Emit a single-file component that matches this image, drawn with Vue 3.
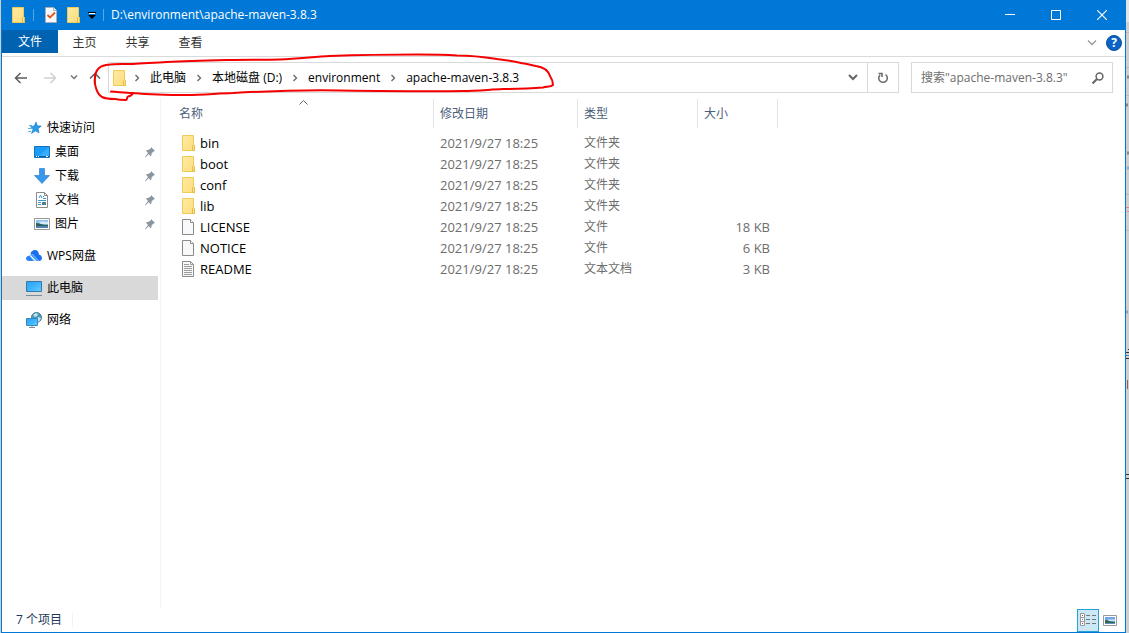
<script setup>
import { ref } from 'vue'

const tabs = ['主页', '共享', '查看']
const crumbs = ['此电脑', '本地磁盘 (D:)', 'environment', 'apache-maven-3.8.3']
const search = ref('')

const quick = [
  { name: '桌面', icon: 'desktop' },
  { name: '下载', icon: 'download' },
  { name: '文档', icon: 'document' },
  { name: '图片', icon: 'picture' }
]

const files = [
  { name: 'bin', kind: 'folder', type: '文件夹', size: '' },
  { name: 'boot', kind: 'folder', type: '文件夹', size: '' },
  { name: 'conf', kind: 'folder', type: '文件夹', size: '' },
  { name: 'lib', kind: 'folder', type: '文件夹', size: '' },
  { name: 'LICENSE', kind: 'file', type: '文件', size: '18 KB' },
  { name: 'NOTICE', kind: 'file', type: '文件', size: '6 KB' },
  { name: 'README', kind: 'text', type: '文本文档', size: '3 KB' }
]
const modified = '2021/9/27 18:25'
</script>

<template>
  <svg class="symbols" aria-hidden="true">
    <linearGradient id="fold" x1="0" y1="0" x2="1" y2="1">
      <stop offset="0" stop-color="#ffeaa2" /><stop offset="1" stop-color="#fcdd7e" />
    </linearGradient>
    <linearGradient id="screen" x1="0" y1="0" x2="1" y2="1">
      <stop offset="0" stop-color="#2ea0f5" /><stop offset="0.5" stop-color="#3cb4ff" /><stop offset="1" stop-color="#6cccff" />
    </linearGradient>
    <symbol id="folder" viewBox="0 0 16 16">
      <path d="M1.5.5h11v10h1v5h-12z" fill="url(#fold)" stroke="#eecb57" />
      <path d="M11.5 15.500v-5l1-1 1 1v5z" fill="#ffe48c" stroke="#e3bd43" />
    </symbol>
    <symbol id="file" viewBox="0 0 16 16">
      <path d="M1.500.5h8l3 3v12h-11z" fill="#f7f9fa" stroke="#8b8b8b" />
      <path d="M9.500.5v3h3" fill="#fff" stroke="#8b8b8b" />
    </symbol>
    <symbol id="text" viewBox="0 0 16 16">
      <path d="M1.500.5h8l3 3v12h-11z" fill="#f7f9fa" stroke="#8b8b8b" />
      <path d="M9.500.5v3h3M3 3.500h5M3 5.500h8M3 7.500h8M3 9.500h8M3 11.500h8M3 13.500h8" fill="none" stroke="#9b9b9b" />
    </symbol>
    <symbol id="check" viewBox="0 0 16 16">
      <path d="M2.500.5h8l3 3v12h-11z" fill="#f7f8fc" stroke="#a9adb8" />
      <path d="M10.500.5v3h3" fill="#fff" stroke="#a9adb8" />
      <path d="m4.500 8 2.500 2.500 5-5" fill="none" stroke="#e3561c" stroke-width="1.800" />
    </symbol>
    <symbol id="star" viewBox="0 0 16 16">
      <path d="m10 2 1.300 3.800 4 .2-3.200 2.700.9 4.300-3.500-2.200L5.500 13.500 7 9.300 4.500 6.500l3.700-.5z" fill="#2b9be8" stroke="#1779c8" stroke-width=".6" />
      <path d="M3 5.500h3M2 8.500h4M2 11.500h3" stroke="#5db8f2" />
    </symbol>
    <symbol id="desktop" viewBox="0 0 16 16">
      <path d="M.5 2.500h15v11H.5z" fill="#1b9cf7" stroke="#1373bd" />
      <path d="M15 3v9H5z" fill="#36adff" />
      <path d="M1 12.500h14" stroke="#0d5c9c" />
      <path d="M2 12.500h1M4 12.500h1M12 12.500h2" stroke="#fff" />
    </symbol>
    <symbol id="download" viewBox="0 0 16 16">
      <path d="M5.500.5h5v7h5L8 15.500.5 7.500h5z" fill="#3a96e8" stroke="#2f82d0" stroke-width=".7" />
    </symbol>
    <symbol id="document" viewBox="0 0 16 16">
      <path d="M2.500.5h8l3 3v12h-11z" fill="#fff" stroke="#8b8b8b" />
      <path d="M10.500.5v3h3" fill="none" stroke="#8b8b8b" />
      <path d="m5 6 1.500-3L8 6M9 4.500h1M9 6.500h3M4 8.500h8M4 10.500h3M4 12.500h3" fill="none" stroke="#3b97c9" />
      <path d="M8 10h4v3H8z" fill="#4c7f8b" />
    </symbol>
    <symbol id="picture" viewBox="0 0 16 16">
      <path d="M.5 2.500h15v11H.5z" fill="#fff" stroke="#989898" />
      <path d="M2 4h12v8H2z" fill="#8fc4ee" />
      <path d="M5 6.500c2-1.500 5-1 9-.5v2H6z" fill="#d7ebf5" />
      <path d="M2 7c3 0 4 1 7 1.500s3 0 5 .5v1H2z" fill="#315f61" />
      <path d="M2 10h12v2H2z" fill="#4f83ad" />
    </symbol>
    <symbol id="cloud" viewBox="0 0 16 16">
      <path d="M4.500 6C5 3 7 2 9 2c2.500 0 4 2 3.800 4.500C15 7 16 8.500 16 10c0 2-1.500 3-3 3L7 6.500z" fill="#1e6ff0" />
      <path d="M4 6.500c1.500-.7 3-.3 4 .8l5 5.700H9L5.500 9z" fill="#4aa5fa" />
      <path d="M3.500 7.500C1 8 0 9 0 10.500S1.200 13 3 13h5z" fill="#2b83f7" />
      <path d="m5 8 5 5" stroke="#fff" stroke-width=".8" />
    </symbol>
    <symbol id="pc" viewBox="0 0 16 16">
      <path d="M.5 1.500h15v10H.5z" fill="url(#screen)" stroke="#3279a8" />
      <path d="M0 15.500h16" stroke="#768e9e" />
    </symbol>
    <symbol id="network" viewBox="0 0 16 16">
      <circle cx="10.500" cy="5.500" r="5" fill="#4f97ba" stroke="#417c9b" />
      <path d="M7 3c2-2 4-2 5-1l-1 2-2 1zM12 5l3 1-2 4-2-2z" fill="#c3e4ec" />
      <path d="M.5 6.500h11v7H.5z" fill="url(#screen)" stroke="#3688b8" />
      <path d="M6 14v1.500M3 15.500h6" stroke="#768e9e" />
    </symbol>
    <symbol id="pin" viewBox="0 0 12 12">
      <path d="m7 1 4 4-1.500.5-2 2c.2 1.500-.3 2.300-1 3L5 8 1.300 11.500 1 11l3-4-2-2.500c1-.8 2-1 3-.8l2-1.700z" fill="#8a949e" />
    </symbol>
    <symbol id="chev" viewBox="0 0 6 8">
      <path d="m1.500 1 3 3-3 3" fill="none" stroke="#6a6a6a" stroke-width="1.400" />
    </symbol>
  </svg>

  <div class="desktop">
    <svg class="behind" width="3" height="633" aria-hidden="true">
      <path d="M0 0h3v22H0z" fill="#e4e4e4" />
      <path d="M0 32.500h3M0 67.500h3M0 95.500h3M0 194.500h3M0 230.500h3" stroke="#bcbcbc" />
      <path d="M1 77h2M0 105h2M1 153h2" stroke="#888" stroke-width="3" />
      <path d="M1 168h2M0 312h2" stroke="#7fb0d2" stroke-width="3" />
      <path d="M0 207.500h3M1 211.500h2" stroke="#d98b98" />
      <path d="M2 349.500h1M0 352.500h3M0 358.500h3M0 474.500h3M0 478.500h3" stroke="#333" />
      <path d="M0 355.500h3" stroke="#3f8cc4" />
      <path d="M1.500 380v9" stroke="#a35f4b" />
    </svg>
    <main class="window">
      <header class="title">
        <svg class="i16"><use href="#folder" /></svg>
        <span class="bar"></span>
        <button class="plain" aria-label="属性"><svg class="i16"><use href="#check" /></svg></button>
        <button class="plain new" aria-label="新建文件夹"><svg class="i16"><use href="#folder" /></svg></button>
        <button class="plain more" aria-label="自定义快速访问工具栏">
          <svg width="8" height="7" viewBox="0 0 8 7"><path d="M1 1.500h6" stroke="#fff" /><path d="M0 .5h8" stroke="#000" /><path d="M0 3h8L4 7z" fill="#000" /></svg>
        </button>
        <span class="bar"></span>
        <h1>D:\environment\apache-maven-3.8.3</h1>
        <div class="controls">
          <button class="plain" aria-label="最小化"><svg width="10" height="10"><path d="M0 4.500h10" stroke="#fff" /></svg></button>
          <button class="plain" aria-label="最大化"><svg width="10" height="10"><path d="M.5.5h9v9h-9z" fill="none" stroke="#fff" /></svg></button>
          <button class="plain" aria-label="关闭"><svg width="10" height="10"><path d="m0 0 10 10M10 0 0 10" stroke="#fff" stroke-width="1.200" /></svg></button>
        </div>
      </header>

      <nav class="ribbon">
        <button class="plain tab active">文件</button>
        <button v-for="t in tabs" :key="t" class="plain tab">{{ t }}</button>
        <button class="plain expand" aria-label="展开功能区"><svg width="10" height="6"><path d="m1 .5 4 4 4-4" fill="none" stroke="#999" stroke-width="1.300" /></svg></button>
        <button class="plain help" aria-label="帮助">?</button>
      </nav>

      <section class="address-row">
        <button class="plain back" aria-label="返回"><svg width="13" height="12"><path d="M13 6H1.500M6.500 1l-5 5 5 5" fill="none" stroke="#5c5c5c" stroke-width="1.500" /></svg></button>
        <button class="plain forward" aria-label="前进"><svg width="13" height="12"><path d="M0 6h11.500M6.500 1l5 5-5 5" fill="none" stroke="#d0d0d0" stroke-width="1.500" /></svg></button>
        <button class="plain recent" aria-label="最近位置"><svg width="8" height="5"><path d="m1 .5 3 3 3-3" fill="none" stroke="#777" stroke-width="1.500" /></svg></button>
        <button class="plain up" aria-label="上移"><svg width="12" height="12"><path d="M6 12V1.500M1 6.500l5-5 5 5" fill="none" stroke="#5c5c5c" stroke-width="1.500" /></svg></button>
        <div class="address">
          <svg class="i16"><use href="#folder" /></svg>
          <template v-for="c in crumbs" :key="c">
            <svg class="chev"><use href="#chev" /></svg>
            <button class="plain crumb">{{ c }}</button>
          </template>
          <button class="plain drop" aria-label="以前的位置"><svg width="10" height="7"><path d="m1 1 4 4 4-4" fill="none" stroke="#666" stroke-width="2" /></svg></button>
          <button class="plain refresh" aria-label="刷新">
            <svg width="12" height="12"><path d="M8.500 2.500A4.300 4.300 0 1 1 3 3M1.500 1.500H5v3.500" fill="none" stroke="#666" stroke-width="1.500" /></svg>
          </button>
        </div>
        <label class="search">
          <input v-model="search" type="text" aria-label="搜索" placeholder="搜索&quot;apache-maven-3.8.3&quot;" />
          <svg width="12" height="12"><circle cx="7.500" cy="4.500" r="3.400" fill="none" stroke="#666" stroke-width="1.500" /><path d="m5 7-4.500 4.500" stroke="#666" stroke-width="2" /></svg>
        </label>
        <svg class="ink" width="470" height="52" viewBox="90 52 470 52" aria-hidden="true">
          <path d="M111 91.500C119 92 126 93 133 93C150 94.500 168 95 187 95C202 95 217 93.500 233 93C268 91 304 90 340 90.500C380 91 425 91.500 463 91C477 91 490 89.500 503 89C518 89 532 88.500 543 87.500C548 86.500 551 87 553 85C553 82 552 79 550 76C548 70 543 67 536 66C530 65 529 64 521 63C513 61 505 60 497 59C484 57 470 55.500 457 55.500C443 54.500 430 54.500 417 54.500C388 54.500 358 55 330 56C313 57 296 59 280 59.500C262 60 245 59.500 227 60C207 60.500 187 61 167 62C155 62.500 144 63.500 133 64C124 64 115 63.500 110 64.500C104 65 101 66 99 68C96 71 95 74 95 78C94 82 95 85 96 88C97 92 99 95 102 97C106 99 110 99 115 99C119 100 123 100 126 100C128 99 126 98 128 96.500C131 96 132 95 133 93" fill="none" stroke="#f50000" stroke-width="2" stroke-linecap="round" stroke-linejoin="round" />
        </svg>
      </section>

      <div class="body">
        <nav class="side">
          <a href="#" class="item"><svg class="i16"><use href="#star" /></svg>快速访问</a>
          <a v-for="q in quick" :key="q.name" href="#" class="item child">
            <svg class="i16"><use :href="'#' + q.icon" /></svg>{{ q.name }}
            <svg class="pin"><use href="#pin" /></svg>
          </a>
          <a href="#" class="item group"><svg class="i16"><use href="#cloud" /></svg>WPS网盘</a>
          <a href="#" class="item group selected"><svg class="i16"><use href="#pc" /></svg>此电脑</a>
          <a href="#" class="item group"><svg class="i16"><use href="#network" /></svg>网络</a>
        </nav>
        <div class="list">
          <table>
            <colgroup><col class="c-name" /><col class="c-date" /><col class="c-type" /><col class="c-size" /></colgroup>
            <thead>
              <tr>
                <th class="sorted">名称<svg class="caret" width="9" height="5"><path d="m.5 4.500 4-4 4 4" fill="none" stroke="#666" /></svg></th>
                <th>修改日期</th><th>类型</th><th>大小</th>
              </tr>
            </thead>
            <tbody>
              <tr v-for="f in files" :key="f.name">
                <td class="name"><div><svg class="i16"><use :href="'#' + f.kind" /></svg>{{ f.name }}</div></td>
                <td class="date">{{ modified }}</td>
                <td class="type">{{ f.type }}</td>
                <td class="size">{{ f.size }}</td>
              </tr>
            </tbody>
          </table>
        </div>
      </div>

      <footer class="status">
        <span class="count">7 个项目</span>
        <button class="plain view on" aria-label="详细信息">
          <svg width="17" height="14">
            <path d="M.5.5h4v4h-4zM.5 4.500h4v4h-4zM.5 8.500h4v4h-4z" fill="#fff" stroke="#999" />
            <path d="M6 2.500h4M12 2.500h4M6 6.500h4M12 6.500h4M6 10.500h4M12 10.500h4" stroke="#777" />
            <path d="M2 2.500h1" stroke="#3a8a50" /><path d="M2 6.500h1" stroke="#4a8df0" /><path d="M2 10.500h1" stroke="#d22" />
          </svg>
        </button>
        <button class="plain view" aria-label="大缩略图">
          <svg width="14" height="11">
            <path d="M.5.5h13v10H.5z" fill="#fff" stroke="#989898" />
            <path d="M2 2h10v7H2z" fill="#6fa8f0" /><path d="M5 4.500h7v1.500H5z" fill="#cfe6f5" />
            <path d="M2 5c3 0 4 1.500 10 2v1H2z" fill="#35674f" /><path d="M2 8h10v1H2z" fill="#5b92c0" />
          </svg>
        </button>
      </footer>
    </main>
  </div>
</template>

<style>
body { margin: 0; background: #cfcfcf; }
</style>

<style scoped>
* { box-sizing: border-box; }
.symbols { position: absolute; width: 0; height: 0; }
.desktop {
  position: relative;
  min-height: 100vh;
  display: flex;
  padding: 0 3px 0 1px;
  background: #cfcfcf;
  font: 12px/20px "Open Sans", "Noto Sans CJK SC", sans-serif;
  color: #000;
}
.behind { position: absolute; right: 0; top: 0; }
.window {
  flex: 1;
  min-width: 0;
  display: flex;
  flex-direction: column;
  background: #fff;
  border: 1px solid #0078d7;
  border-top: 0;
}
svg { display: block; flex: none; }
.i16 { width: 16px; height: 16px; }
.plain {
  display: flex;
  align-items: center;
  justify-content: center;
  flex: none;
  padding: 0;
  border: 0;
  background: none;
  font: inherit;
  color: inherit;
}
.title {
  display: flex;
  align-items: center;
  height: 30px;
  padding-left: 9px;
  background: #0078d7;
  color: #fff;
}
.title .bar { width: 1px; height: 12px; margin: 0 9px 0 6px; background: #5aa6e4; }
.title .new { margin-left: 7px; }
.title .more { width: 8px; margin-left: 6px; }
.title .more + .bar { margin: 0 7px; }
h1 { margin: 0; font-size: 12px; font-weight: 400; white-space: nowrap; }
.controls { display: flex; margin-left: auto; }
.controls .plain { width: 46px; height: 30px; }
.ribbon {
  display: flex;
  height: 27px;
  padding-right: 3px;
  border-bottom: 1px solid #dadbdc;
  color: #333;
}
.tab { width: 53px; height: 26px; }
.tab.active { width: 56px; height: 23px; background: #0063b1; color: #fff; }
.expand { width: 20px; margin-left: auto; }
.help {
  width: 16px;
  height: 16px;
  margin: 5px 0 0 4px;
  border: 1px solid #0a4f9c;
  border-radius: 50%;
  background: #0b63c5;
  color: #fff;
  font-weight: 700;
  line-height: 14px;
}
.address-row {
  position: relative;
  display: flex;
  align-items: center;
  height: 41px;
  padding: 0 12px;
}
.forward { margin-left: 17px; }
.recent { margin-left: 13px; }
.up { margin-left: 11px; }
.address {
  flex: 1;
  min-width: 0;
  display: flex;
  align-items: center;
  height: 31px;
  margin-left: 7px;
  padding-left: 3px;
  border: 1px solid #d9d9d9;
}
.chev { width: 6px; height: 8px; margin: 0 10px; }
.address .i16 + .chev { margin-left: 6px; }
.crumb { white-space: nowrap; }
.drop { width: 28px; height: 29px; margin-left: auto; }
.refresh { width: 31px; height: 29px; border-left: 1px solid #d9d9d9; }
.search {
  display: flex;
  align-items: center;
  width: 202px;
  height: 31px;
  margin-left: 12px;
  padding: 0 8px 0 9px;
  border: 1px solid #d9d9d9;
}
.search input {
  flex: 1;
  min-width: 0;
  padding: 0;
  border: 0;
  outline: 0;
  font: inherit;
}
.search input::placeholder { color: #6d6d6d; opacity: 1; }
.ink { position: absolute; left: 88px; top: -5px; pointer-events: none; }
.body { flex: 1; display: flex; }
.side {
  width: 159px;
  padding: 18px 2px 0 0;
  border-right: 1px solid #f3f3f3;
}
.item {
  display: flex;
  align-items: center;
  gap: 5px;
  height: 24px;
  padding: 0 2px 0 24px;
  color: #000;
  text-decoration: none;
}
.item.child { padding-left: 32px; }
.item.group { margin-top: 8px; }
.item.selected { background: #d9d9d9; }
.pin { width: 12px; height: 12px; margin-left: auto; }
.list { flex: 1; min-width: 0; padding-top: 1px; }
table { width: 617px; table-layout: fixed; border-collapse: separate; border-spacing: 0; }
.c-name { width: 273px; }
.c-date { width: 144px; }
.c-type { width: 120px; }
.c-size { width: 80px; }
th {
  position: relative;
  height: 29px;
  padding: 0 0 0 6px;
  border-right: 1px solid #e3e3e3;
  color: #4c607a;
  font-weight: 400;
  text-align: left;
}
th.sorted { padding-left: 18px; }
.caret { position: absolute; left: 138px; top: 1px; }
td {
  height: 21px;
  padding: 0 0 0 6px;
  color: #6d6d6d;
  vertical-align: middle;
  white-space: nowrap;
}
tbody::before { content: ""; display: block; height: 4px; }
.name { padding-left: 20px; color: #000; font-size: 13px; }
.name div { display: flex; align-items: center; gap: 3px; }
.date { font-size: 13px; }
.type { padding-top: 1px; }
.size { padding-right: 8px; font-size: 13px; text-align: right; }
.status {
  display: flex;
  align-items: center;
  height: 24px;
  padding: 0 4px 0 14px;
  color: #1e395b;
}
.count { margin-right: auto; padding-right: 10px; border-right: 1px solid #f0f0f0; line-height: 14px; }
.view { width: 22px; height: 23px; }
.view.on { border: 1px solid #26a0da; background: #cce8f6; }
</style>
